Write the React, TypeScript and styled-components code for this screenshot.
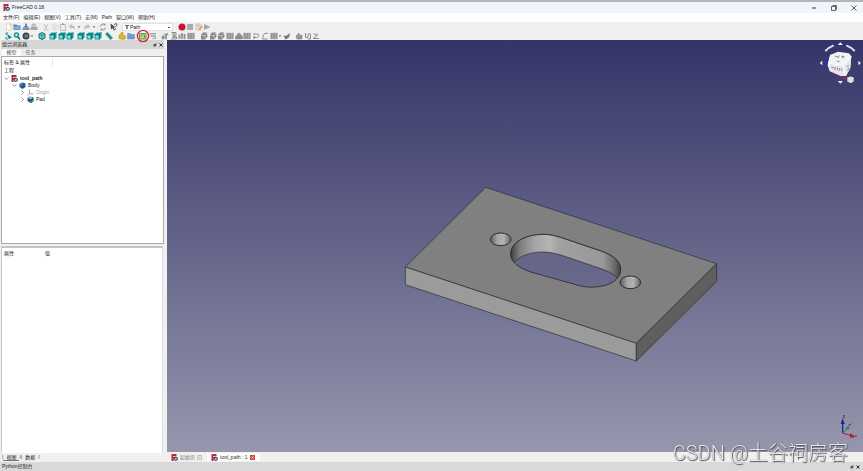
import React from "react";
import styled, { createGlobalStyle, css } from "styled-components";

const GlobalStyle = createGlobalStyle`
  * { box-sizing: border-box; }
  body { margin: 0; background: #f0f0f0; }
  body, button, select {
    font-family: "Liberation Sans", "Noto Sans CJK SC", sans-serif;
    font-size: 5px;
    line-height: 7px;
    color: #222;
  }
  button { margin: 0; padding: 0; border: 0; background: none; }
`;

const Window = styled.div`
  display: grid;
  grid-template-rows: 13px 9px 18px 1fr 9px;
  min-height: 100vh;
  overflow: hidden;
`;

const TitleBar = styled.header`
  display: flex;
  align-items: center;
  gap: 2px;
  padding: 0 0 0 3px;
  border-top: 2px solid #b4b5bc;
  background: #f0f4fb;
`;

const Title = styled.h1`
  flex: 1;
  margin: 0;
  font-size: 5px;
  font-weight: 400;
`;

const WindowButton = styled.button`
  display: grid;
  place-items: center;
  width: 18px;
  height: 10px;
`;

const MenuBar = styled.nav`
  display: flex;
  align-items: center;
  gap: 4px;
  padding: 0 3px;
  background: #fdfdfd;
`;

const MenuItem = styled.button`
  white-space: nowrap;
`;

const Toolbars = styled.div`
  display: grid;
  grid-template-rows: 9px 9px;
  background: #f0f0f0;
`;

const Toolbar = styled.div`
  display: flex;
  align-items: center;
  padding-left: 5px;
`;

const ToolGroup = styled.div<{ $width: number; $after: number }>`
  display: flex;
  flex: none;
  align-items: center;
  justify-content: space-between;
  width: ${(p) => p.$width}px;
  margin-right: ${(p) => p.$after}px;
`;

const ToolButton = styled.button<{ $narrow?: boolean }>`
  position: relative;
  display: grid;
  place-items: center;
  width: ${(p) => (p.$narrow ? 4 : 8)}px;
  height: 8px;
  svg { display: block; }
`;

const Highlight = styled.svg`
  position: absolute;
  left: -3px;
  top: -3px;
  z-index: 2;
  pointer-events: none;
`;

const WorkbenchSelect = styled.select`
  flex: none;
  width: 51px;
  height: 8px;
  margin-right: 5px;
  padding: 0 0 0 7px;
  border: 1px solid #e2e2e2;
  appearance: none;
  line-height: 6px;
  background:
    linear-gradient(#555, #555) 45px 3px / 2px 1px no-repeat,
    linear-gradient(#667, #667) 2px 1px / 4px 1px no-repeat,
    linear-gradient(#889, #889) 3px 2px / 2px 3px no-repeat,
    #fff;
`;

const Main = styled.main`
  display: grid;
  grid-template-columns: 167px 1fr;
  min-height: 0;
`;

const Sidebar = styled.aside`
  display: flex;
  flex-direction: column;
  min-height: 0;
  padding: 0 3px 0 1px;
  background: #f0f0f0;
`;

const DockTitle = styled.div`
  display: flex;
  align-items: center;
  gap: 2px;
  height: 9px;
  padding: 0 1px;
  background: #d6d6d6;
  span { flex: 1; }
`;

const DockTabs = styled.div`
  display: flex;
  height: 7px;
  padding-left: 1px;
`;

const DockTab = styled.button<{ $active?: boolean }>`
  width: 19px;
  line-height: 7px;
  color: #555;
  background: ${(p) => (p.$active ? "#fafafa" : "#ececec")};
`;

const panel = css`
  background: #fff;
  border: 1px solid #a9a9ad;
`;

const TreePanel = styled.section`
  ${panel}
  flex: 189 1 0;
  padding: 1px 2px;
`;

const PropertyPanel = styled.section`
  ${panel}
  flex: 206 1 0;
  margin: 2px 1px 0 0;
  padding: 2px;
  border-color: #c4c4c4 #dedede #fff #c8c8c8;
  border-top-width: 2px;
`;

const TreeHeader = styled.div`
  display: flex;
  align-items: center;
  width: 49px;
  height: 9px;
  border-right: 1px solid #e6e6e6;
`;

const TreeRow = styled.div<{ $level: number; $bold?: boolean; $muted?: boolean }>`
  display: flex;
  align-items: center;
  gap: 2px;
  height: 7px;
  margin-bottom: ${(p) => (p.$level === 0 ? 1 : 0)}px;
  padding-left: ${(p) => Math.max(0, p.$level - 1) * 8}px;
  font-weight: ${(p) => (p.$bold ? 700 : 400)};
  color: ${(p) => (p.$muted ? "#a4a4a4" : "#1c1c1c")};
`;

const PropertyTable = styled.table`
  border-collapse: collapse;
  width: 100%;
  th { padding: 0; text-align: left; font-weight: 400; }
  th:first-child { width: 41px; }
`;

const BottomTabs = styled.div`
  display: flex;
  align-items: center;
  height: 9px;
  padding-left: 1px;
`;

const SlantTab = styled.button<{ $active?: boolean }>`
  padding: 0 3px;
  line-height: 6px;
  border-bottom: 1px solid ${(p) => (p.$active ? "#777" : "transparent")};
`;

const Workspace = styled.div`
  display: grid;
  grid-template-rows: 1fr 10px;
  min-height: 0;
  min-width: 0;
`;

const Viewport = styled.section`
  position: relative;
  overflow: hidden;
  background: linear-gradient(#343468, #9696ad);
`;

const Scene = styled.svg`
  position: absolute;
  inset: 0;
  width: 100%;
  height: 100%;
`;

const NavigationCube = styled.svg`
  position: absolute;
  top: 0;
  right: 1px;
`;

const AxisCross = styled.svg`
  position: absolute;
  right: 6px;
  bottom: 13px;
`;

const DocumentTabs = styled.div`
  display: flex;
  align-items: center;
  background: #f0f0f0;
`;

const DocumentTab = styled.button<{ $active?: boolean }>`
  display: flex;
  align-items: center;
  gap: 2px;
  height: 8px;
  padding: 0 5px 0 4px;
  background: ${(p) => (p.$active ? "#fcfcfc" : "transparent")};
  color: ${(p) => (p.$active ? "#333" : "#777")};
  white-space: pre;
`;

const StatusBar = styled.footer`
  display: flex;
  align-items: center;
  gap: 2px;
  padding: 0 3px 0 2px;
  background: #d9d9d9;
  span { flex: 1; }
`;

const Watermark = styled.div`
  position: fixed;
  right: 15px;
  bottom: 6px;
  font: 300 20px/24px Roboto, "Noto Sans CJK SC", sans-serif;
  color: #e6e6ea;
  text-shadow: 1px 1px 1px #505058, 0 0 1px #6b6b72;
  white-space: nowrap;
  pointer-events: none;
`;

const AppLogo = ({ size = 7 }: { size?: number }) => (
  <svg width={size} height={size} viewBox="0 0 14 14" aria-hidden="true">
    <path d="M1 0h10v4H5v2h4v3H5v5H1z" fill="#c5262e" />
    <path d="M5 4h3v2H5z" fill="#f3d3d3" />
    <circle cx="9.5" cy="9.5" r="3" fill="none" stroke="#27477f" strokeWidth="2.2" />
    <path d="M9.500 5v2M9.500 12v2M5 9.500h2M12 9.500h2" stroke="#27477f" strokeWidth="2" />
  </svg>
);

type IconName =
  | "new" | "open" | "save" | "print" | "cut" | "copy" | "paste" | "undo" | "redo"
  | "refresh" | "help" | "record" | "stop" | "edit" | "play" | "arrow" | "fit"
  | "zoom" | "style" | "iso" | "cube" | "measure" | "part" | "folder" | "job"
  | "post" | "tools" | "sheet" | "bars" | "grid" | "solid" | "house" | "hook"
  | "curve" | "check" | "drop" | "loop" | "shape";

const teal = "#159a9c";
const grey = "#8c8c8c";

const drawings: Record<IconName, React.ReactNode> = {
  new: <><path d="M3 2h9v12H3z" fill="#fff" stroke="#bbb" /><circle cx="12" cy="4" r="3" fill="#f5dc55" /></>,
  open: <><path d="M1 3h6l1 2h7v9H1z" fill="#4d7fb5" /><path d="M3 7h12l-1 6H1z" fill="#86aed8" /></>,
  save: <><path d="M1 9h14v5H1z" fill="#8292a6" /><path d="M6 1h4v5h3l-5 5-5-5h3z" fill="#5a8cba" /></>,
  print: <><path d="M1 8h14v6H1z" fill="#a6a9ae" /><path d="M4 2h7v7H4z" fill="#c4cad0" stroke="#999" /></>,
  cut: <path d="M4 2l6 9M12 2l-6 9M3 13a2 2 0 1 0 3-2M13 13a2 2 0 1 1-3-2" fill="none" stroke="#b5b5b5" strokeWidth="1.600" />,
  copy: <path d="M2 2h8v9H2zM6 5h8v9H6z" fill="#eee" stroke="#d0d0d0" />,
  paste: <><path d="M3 3h10v12H3z" fill="#ededed" stroke="#aaa" strokeWidth="1.500" /><path d="M6 1h4v3H6z" fill="#999" /></>,
  undo: <path d="M7 2L2 7l5 5V9c4 0 5 2 5 5 3-5 1-9-5-9z" fill="#b7b7b7" />,
  redo: <path d="M9 2l5 5-5 5V9c-4 0-5 2-5 5-3-5-1-9 5-9z" fill="#b7b7b7" />,
  refresh: <path d="M3 7a5 5 0 0 1 9-3V1M13 9a5 5 0 0 1-9 3v3M12 4H9M4 12h3" fill="none" stroke="#8d8f91" strokeWidth="2" />,
  help: <><path d="M1 1l1 12 3-3 3 5 2-1-3-5h4z" fill="#34495c" /><path d="M9 4c0-4 6-3 5 0-1 2-3 2-3 4M11 11v2" fill="none" stroke="#34495c" strokeWidth="2" /></>,
  record: <circle cx="8" cy="8" r="7" fill="#c9142d" />,
  stop: <path d="M2 2h12v12H2z" fill="#ababab" />,
  edit: <><path d="M2 2h10v12H2z" fill="#eee6d4" stroke="#b9a98b" /><path d="M4 5h6M4 8h4" stroke="#999" /><path d="M7 12l7-7 2 2-7 7z" fill="#dd9c43" /></>,
  play: <path d="M2 2l13 6-13 6z" fill="#a4a4a4" />,
  arrow: <path d="M3 6h10l-5 5z" fill="#333" />,
  fit: <><path d="M2 2h11v12H2z" fill="#d4efef" /><path d="M2 6V2h4M2 10v4h4" fill="none" stroke={teal} strokeWidth="2" /><path d="M4 4l10 7-4 1-2 3z" fill="#16797d" /></>,
  zoom: <><circle cx="7" cy="6" r="4" fill="#b8eeee" stroke={teal} strokeWidth="3" /><path d="M9 9l5 6" stroke="#1c696c" strokeWidth="3" /></>,
  style: <><circle cx="8" cy="8" r="7" fill="#31494c" /><path d="M5 5h7v6H5z" fill="#688183" /></>,
  iso: <><path d="M8 1l6 3v8l-6 3-6-3V4z" fill="#68cdce" stroke="#216f73" strokeWidth="2" /><path d="M2 4l6 3 6-3M8 7v8" fill="none" stroke="#216f73" strokeWidth="1.500" /></>,
  cube: <><path d="M1 5l4-4h10v10l-4 4H1z" fill={teal} /><path d="M3 7h6v6H3z" fill="#7bdddd" /><path d="M1 5h10v10M11 5l4-4" fill="none" stroke="#116568" strokeWidth="1.500" /></>,
  measure: <path d="M1 4l4-3 10 11-4 3zM6 7l2-2M9 10l2-2" fill={teal} stroke="#116d70" />,
  part: <path d="M2 6l4-1V1h4v5l5 2v5l-5 2-8-2z" fill="#e0b51d" stroke="#a88421" />,
  folder: <path d="M1 3h6l1 2h7v9H1z" fill="#6e9cce" stroke="#5b83b0" />,
  job: <><path d="M1 3h13v11H1z" fill="#c7dfa2" stroke="#659442" strokeWidth="2" /><path d="M4 11V6h7v5M9 13l4-6" fill="none" stroke="#5e8938" strokeWidth="1.500" /></>,
  post: <path d="M2 3h12M2 6h12M4 9h9v4H7" fill="none" stroke="#a3a3a3" strokeWidth="2" />,
  tools: <path d="M2 8h4v6H2zM8 5l5-3v4l-2 1v7H8zM4 4h4" fill={grey} stroke={grey} />,
  sheet: <path d="M3 1h9v5H6v3h7v5H2M4 4h6M5 11h6" fill="none" stroke={grey} strokeWidth="2" />,
  bars: <path d="M1 5h4v9H1zM6 2h4v12H6zM11 4h4v10h-4z" fill={grey} stroke="#ccc" />,
  grid: <path d="M1 2h14v12H1zM1 6h14M6 2v12M11 2v12M1 10h14" fill="#898989" stroke="#bdbdbd" />,
  solid: <><path d="M2 6l4-5h8l1 8-5 6H2z" fill="#858585" /><path d="M3 7h7v5M10 7l4-5" fill="none" stroke="#c8c8c8" strokeWidth="2" /></>,
  house: <path d="M1 14V8h3V5l4-3 4 3v3h3v6zM4 10h8" fill="#929292" stroke="#7c7c7c" />,
  hook: <path d="M2 4h8c6 0 4 7-1 7H3M6 8l-4 3 4 3" fill="none" stroke={grey} strokeWidth="2" />,
  curve: <path d="M14 3C3 1 5 8 3 14h10" fill="none" stroke={grey} strokeWidth="2" />,
  check: <path d="M1 7l5 1 8-6-2 9-7 4z" fill="#777" />,
  drop: <path d="M2 8l6-6v4h6v8H4z" fill="#999" stroke="#777" />,
  loop: <path d="M3 2v9h5V4h5v10H7" fill="none" stroke={grey} strokeWidth="2" />,
  shape: <path d="M3 3l7 4-7 6h11M10 3v5" fill="none" stroke={grey} strokeWidth="2" />,
};

const Tool = ({ icon, marked }: { icon: IconName; marked?: boolean }) => (
  <ToolButton aria-label={icon} $narrow={icon === "arrow"}>
    <svg width={icon === "arrow" ? 4 : 8} height={icon === "arrow" ? 4 : 8} viewBox="0 0 16 16">
      {drawings[icon]}
    </svg>
    {marked && (
      <Highlight width="14" height="14" viewBox="0 0 14 14">
        <circle cx="7" cy="7" r="5.600" fill="none" stroke="#dc2638" strokeWidth="1.400" />
      </Highlight>
    )}
  </ToolButton>
);

type Group = { icons: IconName[]; width: number; after: number };

const fileGroups: Group[] = [
  { icons: ["new", "open", "save", "print"], width: 33, after: 4 },
  { icons: ["cut", "copy", "paste"], width: 25, after: 1 },
  { icons: ["undo", "arrow", "redo", "arrow"], width: 28, after: 3 },
  { icons: ["refresh", "help"], width: 19, after: 4 },
];

const viewGroups: Group[] = [
  { icons: ["fit", "zoom", "style", "arrow"], width: 29, after: 4 },
  { icons: ["iso"], width: 8, after: 3 },
  { icons: ["cube", "cube", "cube"], width: 25, after: 3 },
  { icons: ["cube", "cube", "cube"], width: 25, after: 3 },
  { icons: ["measure"], width: 8, after: 5 },
  { icons: ["part", "folder"], width: 17, after: 4 },
  { icons: ["job", "post"], width: 18, after: 4 },
  { icons: ["tools", "sheet", "bars", "grid"], width: 34, after: 5 },
  {
    icons: ["solid", "solid", "solid", "grid", "house", "grid", "hook", "curve", "grid", "arrow", "check"],
    width: 91,
    after: 4,
  },
  { icons: ["drop", "loop", "shape"], width: 25, after: 0 },
];

const Groups = ({ groups }: { groups: Group[] }) => (
  <>
    {groups.map((g, i) => (
      <ToolGroup key={i} $width={g.width} $after={g.after}>
        {g.icons.map((icon, j) => (
          <Tool key={j} icon={icon} marked={icon === "job"} />
        ))}
      </ToolGroup>
    ))}
  </>
);

const Chevron = ({ open }: { open?: boolean }) => (
  <svg width="5" height="5" viewBox="0 0 10 10" aria-hidden="true">
    <path d={open ? "M1 3l4 4 4-4" : "M3 1l4 4-4 4"} fill="none" stroke="#777" strokeWidth="1.500" />
  </svg>
);

const BodyIcon = ({ pad }: { pad?: boolean }) => (
  <svg width="7" height="7" viewBox="0 0 14 14" aria-hidden="true">
    <path d="M1 4l5-3 7 2v7l-6 4-6-4z" fill="#24578f" />
    <path d={pad ? "M2 4l5-2 4 2-4 2z" : "M3 3h4v4H3z"} fill={pad ? "#d9e4ef" : "#5f91c5"} />
    {pad && <path d="M7 10l2 3 5-6" fill="none" stroke="#35a34b" strokeWidth="2.500" />}
  </svg>
);

const OriginIcon = () => (
  <svg width="7" height="7" viewBox="0 0 14 14" aria-hidden="true">
    <path d="M5 1v8l8 1M5 9l-4 4" fill="none" stroke="#8c8c8c" strokeWidth="1.500" />
  </svg>
);

const DockButtons = () => (
  <>
    <svg width="4" height="4" viewBox="0 0 8 8" aria-hidden="true"><path d="M1 2h5v5H1zM4 1h3v4" fill="#555" /></svg>
    <svg width="4" height="4" viewBox="0 0 8 8" aria-hidden="true"><path d="M1 1l6 6M7 1L1 7" stroke="#333" strokeWidth="2" /></svg>
  </>
);

const slot =
  "M332 222C332 188 375 163 430 163C450 163 465 167 485 173L600 212C640 226 662 243 662 268C662 300 625 321 575 321C555 321 545 319 525 313L390 275C355 263 332 245 332 222Z";

const Plate = () => (
  <Scene viewBox="0 0 696 412" role="img" aria-label="Pad">
    <defs>
      <linearGradient id="wall" x1="332" x2="662" y1="0" y2="0" gradientUnits="userSpaceOnUse">
        <stop offset="0" stopColor="#3f3f3f" />
        <stop offset="0.080" stopColor="#7d7d7d" />
        <stop offset="0.220" stopColor="#a5a5a5" />
        <stop offset="0.360" stopColor="#b4b4b4" />
        <stop offset="0.450" stopColor="#a0a0a0" />
        <stop offset="0.840" stopColor="#999" />
        <stop offset="0.930" stopColor="#717171" />
        <stop offset="1" stopColor="#444" />
      </linearGradient>
      <linearGradient id="bore">
        <stop offset="0" stopColor="#5c5c5c" />
        <stop offset="0.350" stopColor="#a6a6a6" />
        <stop offset="0.650" stopColor="#b2b2b2" />
        <stop offset="1" stopColor="#626262" />
      </linearGradient>
      <linearGradient id="through" x1="0" x2="0" y1="216" y2="321" gradientUnits="userSpaceOnUse">
        <stop offset="0" stopColor="#66668b" />
        <stop offset="1" stopColor="#6f6f91" />
      </linearGradient>
      <clipPath id="slotClip"><path d={slot} /></clipPath>
    </defs>
    <g transform="translate(233 140) scale(0.33333)" stroke="#2b2b2b" strokeWidth="2" strokeLinejoin="round">
      <path d="M257 22L950 251L709 490L16 261Z" fill="#808080" />
      <path d="M16 261L709 490V543L16 314Z" fill="#9b9b9b" />
      <path d="M709 490L950 251V304L709 543Z" fill="#5f5f5f" />
      <path d={slot} fill="url(#wall)" />
      <g clipPath="url(#slotClip)">
        <path d={slot} transform="translate(0 53)" fill="url(#through)" />
      </g>
      <path d={slot} fill="none" />
      <ellipse cx="302" cy="178" rx="31" ry="19" fill="url(#bore)" strokeWidth="3" />
      <ellipse cx="691" cy="307" rx="31" ry="19" fill="url(#bore)" strokeWidth="3" />
    </g>
  </Scene>
);

const Cube = () => (
  <NavigationCube width="44" height="46" viewBox="114 120 132 138" role="img" aria-label="Navigation cube">
    <g fill="#e9edfa">
      <path d="M173 135l8-8 8 8zM173 243l8 8 8-8zM127 182l-8 7 8 7zM235 182l8 7-8 7z" />
    </g>
    <path d="M136 153Q146 142 161 136M199 136Q214 142 224 153" fill="none" stroke="#dfe5f8" strokeWidth="6" />
    <path d="M142 165V205L168 225" fill="none" stroke="#2a2ad0" strokeWidth="3" />
    <path d="M160 220L201 238" stroke="#b52347" strokeWidth="3" />
    <path d="M152 164L174 155L207 160L214 169L211 204L198 227L182 227L149 213L143 196Z" fill="#f3f4f7" />
    <path d="M150 188L190 195L212 174L211 204L198 227L182 227L149 213Z" fill="#e6e7ee" />
    <path d="M152 164L145 190L190 196L213 170M190 196L195 227" fill="none" stroke="#fff" strokeWidth="3" />
    <path d="M164 168l10 3m4-5l-4 9m10-6l10 2m-6-4v8M170 183l9 2M154 201l8 3m3-3v9m6-8l2 9m6-7l-2 9m8-8v8M200 201l6-6m-3 16l5-9" stroke="#747986" strokeWidth="2.500" />
    <path d="M202 233l10-4 9 4v12l-9 4-10-4z" fill="#d7d8dc" />
    <path d="M202 233l10 4 9-4M212 237v12" fill="none" stroke="#f7f7f7" strokeWidth="2" />
  </NavigationCube>
);

const Axes = () => (
  <AxisCross width="20" height="24" viewBox="0 0 60 72" role="img" aria-label="Axes">
    <path d="M17 54V22" stroke="#25259b" strokeWidth="4" />
    <path d="M11 27L17 10l6 17z" fill="#20209d" />
    <path d="M17 54l18-17" stroke="#31783e" strokeWidth="3" />
    <path d="M25 41l10-10 2 12z" fill="#258e31" />
    <path d="M17 54l29 9" stroke="#9c2835" strokeWidth="3" />
    <path d="M39 55l18 11-18 2z" fill="#a6202d" />
    <path d="M18 2h6l-6 6h6M35 27l4 5 4-7M55 60l4 6" fill="none" stroke="#333" strokeWidth="2" />
  </AxisCross>
);

const menus = ["文件(F)", "编辑(E)", "视图(V)", "工具(T)", "宏(M)", "Path", "窗口(W)", "帮助(H)"];

export default function App() {
  return (
    <Window>
      <GlobalStyle />
      <TitleBar>
        <AppLogo />
        <Title>FreeCAD 0.18</Title>
        <WindowButton aria-label="Minimize">
          <svg width="6" height="6" viewBox="0 0 6 6"><path d="M1 3h4" stroke="#333" /></svg>
        </WindowButton>
        <WindowButton aria-label="Restore">
          <svg width="6" height="6" viewBox="0 0 12 12"><path d="M1 3h8v8H1zM3 1h8v8" fill="none" stroke="#333" strokeWidth="1.500" /></svg>
        </WindowButton>
        <WindowButton aria-label="Close">
          <svg width="6" height="6" viewBox="0 0 12 12"><path d="M1 1l10 10M11 1L1 11" stroke="#333" strokeWidth="1.500" /></svg>
        </WindowButton>
      </TitleBar>
      <MenuBar>
        {menus.map((m) => <MenuItem key={m}>{m}</MenuItem>)}
      </MenuBar>
      <Toolbars>
        <Toolbar>
          <Groups groups={fileGroups} />
          <WorkbenchSelect aria-label="Workbench"><option>Path</option></WorkbenchSelect>
          <Groups groups={[{ icons: ["record", "stop", "edit", "play"], width: 33, after: 0 }]} />
        </Toolbar>
        <Toolbar>
          <Groups groups={viewGroups} />
        </Toolbar>
      </Toolbars>
      <Main>
        <Sidebar>
          <DockTitle><span>组合浏览器</span><DockButtons /></DockTitle>
          <DockTabs>
            <DockTab $active>模型</DockTab>
            <DockTab>任务</DockTab>
          </DockTabs>
          <TreePanel>
            <TreeHeader>标签 &amp; 属性</TreeHeader>
            <TreeRow $level={0}>工程</TreeRow>
            <TreeRow $level={1} $bold><Chevron open /><AppLogo />tool_path</TreeRow>
            <TreeRow $level={2}><Chevron open /><BodyIcon />Body</TreeRow>
            <TreeRow $level={3} $muted><Chevron /><OriginIcon />Origin</TreeRow>
            <TreeRow $level={3}><Chevron /><BodyIcon pad />Pad</TreeRow>
          </TreePanel>
          <PropertyPanel>
            <PropertyTable>
              <thead><tr><th>属性</th><th>值</th></tr></thead>
            </PropertyTable>
          </PropertyPanel>
          <BottomTabs>
            <span>\</span><SlantTab $active>视图</SlantTab><span>/\</span>
            <SlantTab>数据</SlantTab><span>/</span>
          </BottomTabs>
        </Sidebar>
        <Workspace>
          <Viewport>
            <Plate />
            <Cube />
            <Axes />
          </Viewport>
          <DocumentTabs>
            <DocumentTab>
              <AppLogo />起始页
              <svg width="5" height="5" viewBox="0 0 10 10"><path d="M1 1h8v8H1zM3 3l4 4M7 3L3 7" fill="none" stroke="#999" /></svg>
            </DocumentTab>
            <DocumentTab $active>
              <AppLogo />tool_path : 1
              <svg width="5" height="5" viewBox="0 0 10 10"><path d="M0 0h10v10H0z" fill="#cf4a32" /><path d="M3 3l4 4M7 3L3 7" stroke="#fff" strokeWidth="1.500" /></svg>
            </DocumentTab>
          </DocumentTabs>
        </Workspace>
      </Main>
      <StatusBar><span>Python控制台</span><DockButtons /></StatusBar>
      <Watermark>CSDN @土谷祠房客</Watermark>
    </Window>
  );
}
